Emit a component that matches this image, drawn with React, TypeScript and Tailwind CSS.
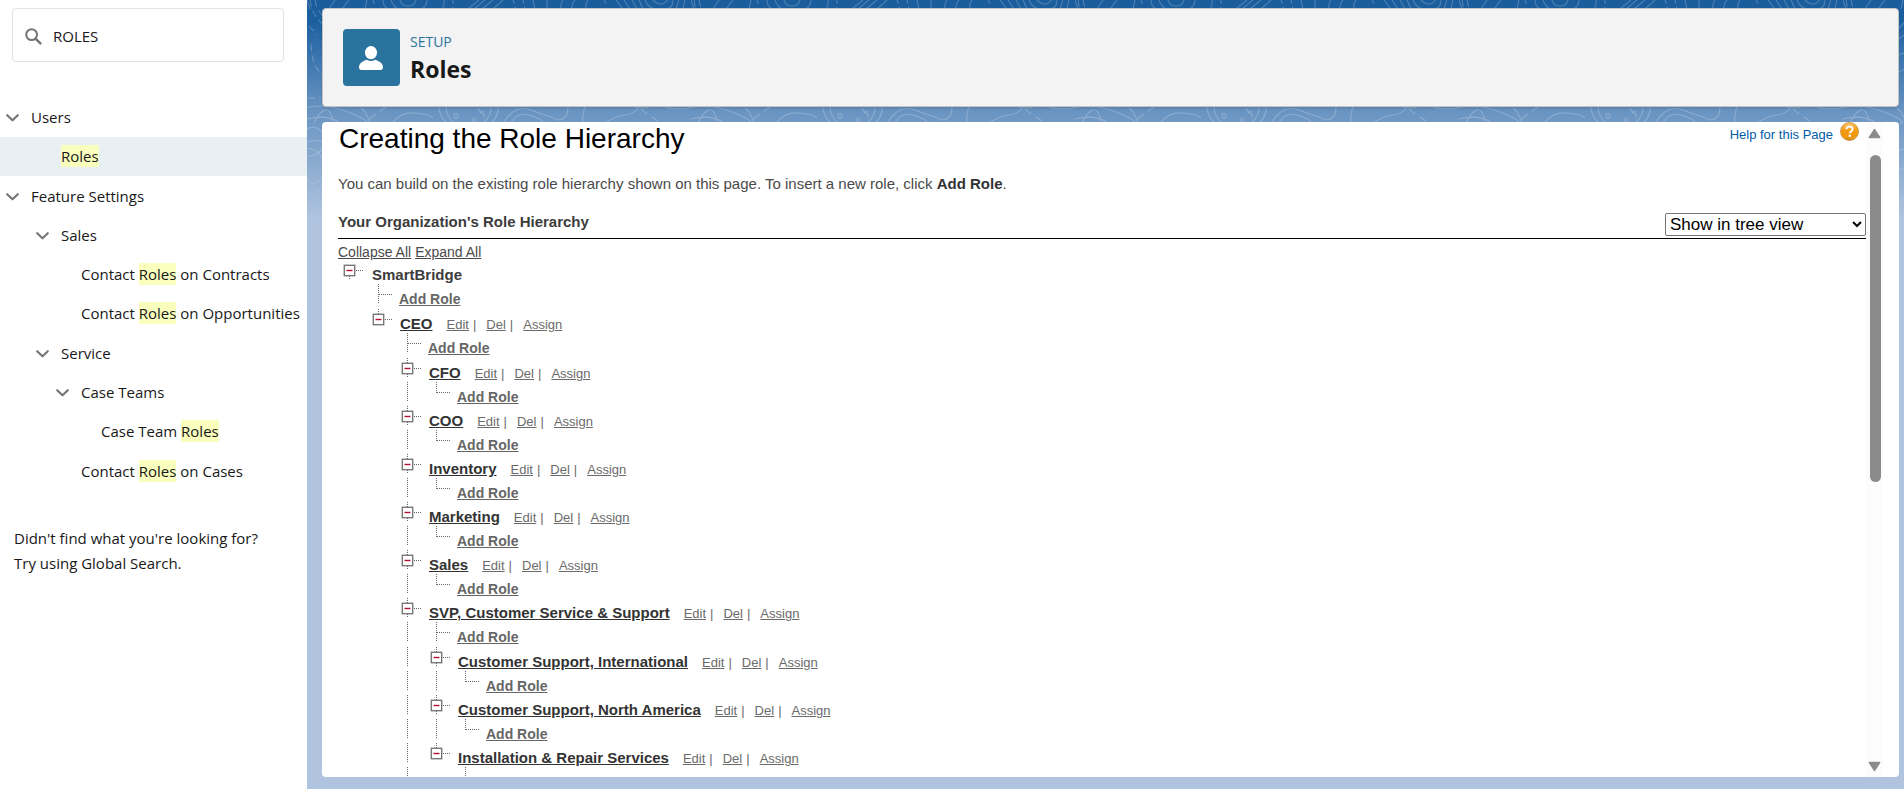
import React from "react";

/* ---------- Sidebar ---------- */

type NavNode = { label: string; active?: boolean; children?: NavNode[] };

const NAV: NavNode[] = [
  { label: "Users", children: [{ label: "Roles", active: true }] },
  {
    label: "Feature Settings",
    children: [
      {
        label: "Sales",
        children: [{ label: "Contact Roles on Contracts" }, { label: "Contact Roles on Opportunities" }],
      },
      {
        label: "Service",
        children: [
          { label: "Case Teams", children: [{ label: "Case Team Roles" }] },
          { label: "Contact Roles on Cases" },
        ],
      },
    ],
  },
];

const NAV_INDENT = ["pl-[31px]", "pl-[61px]", "pl-[81px]", "pl-[101px]"];
const NAV_GROUP_INDENT = ["pl-[6px]", "pl-[36px]", "pl-[56px]", "pl-[76px]"];

function Highlighted({ text }: { text: string }) {
  return (
    <span className="whitespace-pre">
      {text.split(/(Roles)/).map((part, i) =>
        part === "Roles" ? (
          <mark key={i} className="bg-[#faffbd] py-px text-inherit">
            {part}
          </mark>
        ) : (
          part
        ),
      )}
    </span>
  );
}

function NavList({ nodes, level = 0 }: { nodes: NavNode[]; level?: number }) {
  return (
    <ul className={level === 0 ? "" : "pb-px"}>
      {nodes.map((node) => (
        <li key={node.label}>
          {node.children ? (
            <button
              type="button"
              aria-expanded="true"
              className={`flex h-[39px] w-full items-center gap-3 text-left ${NAV_GROUP_INDENT[level]}`}
            >
              <svg width="13" height="8" viewBox="0 0 13 8" className="shrink-0" aria-hidden="true">
                <path
                  d="M1.2 1.2 6.5 6.3 11.8 1.2"
                  fill="none"
                  stroke="#747474"
                  strokeWidth="2.1"
                  strokeLinecap="round"
                  strokeLinejoin="round"
                />
              </svg>
              <span>{node.label}</span>
            </button>
          ) : (
            <a
              href="#"
              className={`flex h-[39px] items-center ${NAV_INDENT[level]} ${node.active ? "bg-[#e8f0f3]" : ""}`}
            >
              <Highlighted text={node.label} />
            </a>
          )}
          {node.children && <NavList nodes={node.children} level={level + 1} />}
        </li>
      ))}
    </ul>
  );
}

function Sidebar() {
  return (
    <aside className="w-[307px] shrink-0 overflow-hidden bg-white font-['Open_Sans','Noto_Sans',sans-serif] text-[15px] text-[#181818]">
      <label className="mt-2 ml-3 flex h-[54px] w-[272px] items-center gap-[11px] rounded border border-[#e2e2e2] pt-[2px] pl-3">
        <svg width="17" height="17" viewBox="0 0 17 17" aria-hidden="true">
          <circle cx="6.6" cy="6.6" r="5.4" fill="none" stroke="#747474" strokeWidth="2" />
          <path d="m10.8 10.8 4.6 4.6" stroke="#747474" strokeWidth="2.4" strokeLinecap="round" />
        </svg>
        <input
          type="text"
          aria-label="Quick Find"
          defaultValue="ROLES"
          className="w-[200px] bg-transparent outline-none"
        />
      </label>
      <nav className="mt-9" aria-label="Setup">
        <NavList nodes={NAV} />
      </nav>
      <p className="mt-[33px] pl-[14px] leading-[25px]">
        Didn't find what you're looking for?
        <br />
        Try using Global Search.
      </p>
    </aside>
  );
}

/* ---------- Backdrop ---------- */

function Backdrop() {
  return (
    <svg className="absolute inset-0 h-full w-full" aria-hidden="true">
      <defs>
        <linearGradient id="sky" gradientUnits="userSpaceOnUse" x1="0" y1="0" x2="0" y2="220">
          <stop offset="0" stopColor="#1a5c9c" />
          <stop offset="0.1" stopColor="#1d60a0" />
          <stop offset="0.5" stopColor="#6893c1" />
          <stop offset="1" stopColor="#b0c4df" />
        </linearGradient>
        <pattern id="contours" patternUnits="userSpaceOnUse" width="384" height="240">
          <g fill="none" stroke="#fff" strokeOpacity="0.22" strokeWidth="1.1">
            <path d="M3 0Q5 16 18 26M8 0Q10 14 22 20M2 26l8 9M4 44q1 20 7 26t7 12M1 98h6l6-1" strokeDasharray="7 4" />
            <path d="M-12 0l-2 9M-6 0v9M0 0l3 9M378 0l-2 9M372 0l-3 9M309 0l7 9M317 0l6 9M325 0l5 9M332 0l4 9M338 0Q342 10 354 10T366 0M346 0q8 8 15 0" />
            <path d="M76 0q0 6 5 9M84 0q2 6 7 9M93 0q1 6 8 6t8-6M120 0q0 5-5 9M137 0q1 5-2 9M60 0l-2 9M28 0l-6 9M42 0l-7 9" />
            <path d="M172 0l-11 9M178 0l-11 9M186 0l-11 9M196 0l-10 9M226 0l2 9M240 0v9M256 0q-3 4-2 9M268 0q-4 4-3 9M281 0q-3 4-2 9" />
            <path d="M206 0l3 9M216 0l2 9M146 0v9M297 0l4 6M66 0l2 6" strokeDasharray="4 3" />
            <path d="M-26 107Q-18 111 2 107T46 114 52 123M358 107Q370 111 386 107" />
            <path d="M7 123Q12 112 18 110T26 123M0 119Q18 114 32 122" />
            <path d="M63 119l6-5M73 111l6-4M334 109l6 5M345 117l6 4" />
            <path d="M86 122Q94 112 108 113T126 118" />
            <path d="M132 107Q132 116 140 123M139 107Q139 116 147 123M191 107Q192 116 184 123M184 107Q184 117 176 123" />
            <ellipse cx="149" cy="116" rx="1.8" ry="2.6" />
            <ellipse cx="167" cy="120" rx="1.4" ry="2" />
            <path d="M171 108l3 5 1-2 3 6" />
            <path d="M197 122Q208 104 224 110T252 120Q261 119 261 107M204 122Q212 112 222 115T236 122" />
            <path d="M278 107Q275 114 276 123M300 122Q308 116 318 115T332 107M328 107q8 2 14 0" />
            <path d="M0 142q12-3 16 0M0 148q14 2 16 14M0 157q14-3 16-10M0 180q8 8 16-4M0 129q8-5 16 4" />
            <path d="M1 195l5-1M9 192l5-2M0 217l6-3M2 229l8-3" />
            <path d="M55 40q4-5 9-6M56 55q5-2 8-4M55 72q6-2 9-6M54 108q10 8 11 30M56 150q5 0 8-3M55 168q6 3 9 2M56 200h8M56 214l8-3M56 28l8-8" />
          </g>
        </pattern>
        <linearGradient id="fade" x1="0" y1="0" x2="0" y2="1">
          <stop offset="0.6" stopColor="#fff" />
          <stop offset="1" stopColor="#000" />
        </linearGradient>
        <mask id="fadeOut" maskUnits="userSpaceOnUse" x="0" y="0" width="4000" height="240">
          <rect width="4000" height="240" fill="url(#fade)" />
        </mask>
      </defs>
      <rect width="100%" height="100%" fill="#b0c4df" />
      <rect width="100%" height="220" fill="url(#sky)" />
      <rect width="100%" height="240" fill="url(#contours)" mask="url(#fadeOut)" />
    </svg>
  );
}

/* ---------- Page header ---------- */

function PageHeader() {
  return (
    <header className="flex h-[99px] shrink-0 items-center gap-[10px] rounded border border-[#c4c4c4] bg-[#f3f3f3] pl-5 font-['Open_Sans','Noto_Sans',sans-serif] shadow-[0_2px_2px_rgba(0,0,0,0.1)]">
      <span className="flex size-[57px] items-center justify-center rounded bg-[#2a739e]">
        <svg width="25" height="24" viewBox="0 0 25 24" fill="#fff" aria-hidden="true">
          <ellipse cx="12" cy="6.6" rx="6.1" ry="6.6" />
          <path d="M0 21.6C0 17 3.6 15.3 7 13.9q.6-.2 1.2.1 3.8 2.2 7.6 0 .6-.3 1.2-.1c3.4 1.4 7 3.1 7 7.7 0 1.5-1 2.4-2.4 2.4H2.4C1 24 0 23.1 0 21.6Z" />
        </svg>
      </span>
      <h1 className="flex flex-col pt-[3px]">
        <span className="text-sm leading-5 text-[#2a739e]">SETUP</span>
        <span className="text-[23px] leading-[34px] font-bold text-[#181818]">Roles</span>
      </h1>
    </header>
  );
}

/* ---------- Role tree ---------- */

/* `partial` marks a branch whose child rows have not been loaded yet. */
type Role = { name: string; children?: Role[]; partial?: boolean };

const CEO: Role = {
  name: "CEO",
  partial: true,
  children: [
    { name: "CFO" },
    { name: "COO" },
    { name: "Inventory" },
    { name: "Marketing" },
    { name: "Sales" },
    {
      name: "SVP, Customer Service & Support",
      children: [
        { name: "Customer Support, International" },
        { name: "Customer Support, North America" },
        { name: "Installation & Repair Services", partial: true },
      ],
    },
  ],
};

type Cell = "blank" | "line" | "tee" | "corner" | "root" | "node" | "lastNode";

function TreeCell({ kind }: { kind: Cell }) {
  const isNode = kind === "root" || kind === "node" || kind === "lastNode";
  return (
    <svg width="29" height="20" viewBox="0 0 29 20" className="shrink-0" aria-hidden="true">
      <g stroke="#666" strokeWidth="1" strokeDasharray="1 1" fill="none">
        {(kind === "line" || kind === "tee") && <path d="M11.5 0V19" />}
        {kind === "corner" && <path d="M11.5 0V11" />}
        {(kind === "tee" || kind === "corner") && <path d="M12 10.5H25" />}
        {isNode && <path d="M18 10.5H25" />}
        {(kind === "node" || kind === "lastNode") && <path d="M11.5 0V5" />}
        {(kind === "node" || kind === "root") && <path d="M11.5 16V19" />}
      </g>
      {isNode && (
        <>
          <rect x="6.3" y="5.3" width="10.4" height="10.4" fill="#fff" stroke="#777" strokeWidth="1.4" />
          <path d="M8.5 10.5h6" stroke="#b3122e" strokeWidth="1.4" />
        </>
      )}
    </svg>
  );
}

function AddRow({ trail, last }: { trail: Cell[]; last: boolean }) {
  return (
    <li className={`flex items-start ${last ? "h-6" : "h-[25px]"}`}>
      {trail.map((kind, i) => (
        <TreeCell key={i} kind={kind} />
      ))}
      <TreeCell kind={last ? "corner" : "tee"} />
      <a href="#" className="ml-[3px] pt-[6px] text-sm leading-[19px] font-bold text-[#666] underline">
        Add Role
      </a>
    </li>
  );
}

function RoleBranch({ role, trail, last }: { role: Role; trail: Cell[]; last: boolean }) {
  const childTrail: Cell[] = [...trail, last ? "blank" : "line"];
  const children = role.children;
  return (
    <li>
      <div className="flex h-6 items-start">
        {trail.map((kind, i) => (
          <TreeCell key={i} kind={kind} />
        ))}
        <TreeCell kind={last ? "lastNode" : "node"} />
        <div className="ml-1 flex items-baseline pt-[5px] text-[13px] leading-[19px] whitespace-nowrap text-[#6b6b6b]">
          <a href="#" className="mr-[14px] text-[15px] font-bold text-[#333] underline">
            {role.name}
          </a>
          <a href="#" className="underline">Edit</a>
          <span className="mr-[10px] ml-1">|</span>
          <a href="#" className="underline">Del</a>
          <span className="mr-[10px] ml-1">|</span>
          <a href="#" className="underline">Assign</a>
        </div>
      </div>
      {role.partial && !children ? (
        <div className="flex h-6 items-start">
          {childTrail.map((kind, i) => (
            <TreeCell key={i} kind={kind} />
          ))}
          <TreeCell kind="tee" />
        </div>
      ) : (
        <ul>
          <AddRow trail={childTrail} last={!children} />
          {children?.map((child, i) => (
            <RoleBranch
              key={child.name}
              role={child}
              trail={childTrail}
              last={!role.partial && i === children.length - 1}
            />
          ))}
        </ul>
      )}
    </li>
  );
}

function RoleTree() {
  return (
    <div>
      <div className="flex h-6 items-start">
        <TreeCell kind="root" />
        <span className="ml-[5px] pt-[5px] text-[15px] leading-[19px] font-bold text-[#3c3c3c]">SmartBridge</span>
      </div>
      <ul>
        <AddRow trail={["blank"]} last={false} />
        <RoleBranch role={CEO} trail={["blank"]} last />
      </ul>
    </div>
  );
}

/* ---------- Content ---------- */

function HelpIcon() {
  return (
    <svg width="19" height="19" viewBox="0 0 19 19" aria-hidden="true">
      <defs>
        <linearGradient id="amber" x1="0" y1="0" x2="0" y2="1">
          <stop offset="0" stopColor="#fbc56a" />
          <stop offset="0.45" stopColor="#f39a12" />
          <stop offset="0.85" stopColor="#ee9a10" />
          <stop offset="1" stopColor="#b97d2c" />
        </linearGradient>
      </defs>
      <circle cx="9.5" cy="9.5" r="9" fill="url(#amber)" stroke="#c98a35" strokeWidth="0.8" />
      <path
        d="M6.4 7.2C6.5 5.4 7.8 4.5 9.5 4.5s3.1 1 3.1 2.6c0 2.1-2.7 2.2-2.7 4.2"
        fill="none"
        stroke="#fff"
        strokeWidth="1.9"
      />
      <circle cx="9.8" cy="13.8" r="1.2" fill="#fff" />
    </svg>
  );
}

function ScrollBar() {
  return (
    <div className="mr-4 flex w-[17px] shrink-0 flex-col items-center bg-[#fcfcfc] pt-[6px] pb-[5px]" aria-hidden="true">
      <svg width="13" height="11" viewBox="0 0 13 11">
        <path d="M6.5 1.6 11.6 9.4H1.4Z" fill="#8b8b8b" stroke="#8b8b8b" strokeWidth="1.6" strokeLinejoin="round" />
      </svg>
      <div className="mt-4 w-full flex-1 px-[3px]">
        <div className="ml-px h-[54%] w-[11px] rounded-full bg-[#8b8b8b]" />
      </div>
      <svg width="13" height="11" viewBox="0 0 13 11">
        <path d="M6.5 9.4 11.6 1.6H1.4Z" fill="#8b8b8b" stroke="#8b8b8b" strokeWidth="1.6" strokeLinejoin="round" />
      </svg>
    </div>
  );
}

function Content() {
  return (
    <main className="mt-[15px] mb-3 flex min-h-0 flex-1 overflow-hidden rounded bg-white font-['Liberation_Sans',Arial,sans-serif]">
      <div className="min-w-0 flex-1 overflow-hidden pl-4">
        <div className="flex items-start justify-between">
          <h2 className="pl-px text-[28px] leading-[34px] text-black">Creating the Role Hierarchy</h2>
          <a href="#" className="mr-[7px] flex items-start gap-[7px] text-[13px] text-[#015ba7]">
            <span className="pt-1 leading-[18px]">Help for this Page</span>
            <HelpIcon />
          </a>
        </div>
        <p className="mt-[18px] text-[15px] leading-5 text-[#4a4a4a]">
          You can build on the existing role hierarchy shown on this page. To insert a new role, click{" "}
          <b className="text-[#333]">Add Role</b>.
        </p>
        <div className="mt-[19px] flex items-start justify-between border-b border-black pb-[2px]">
          <h3 className="text-[15px] leading-[18px] font-bold text-[#3c3c3c]">Your Organization's Role Hierarchy</h3>
          <select
            aria-label="Hierarchy view"
            className="h-[23px] w-[201px] rounded-[2px] border border-[#767676] bg-white text-[17px] leading-5 text-black"
          >
            <option>Show in tree view</option>
            <option>Show in sorted list view</option>
            <option>Show in list view</option>
          </select>
        </div>
        <div className="flex h-[21px] items-start gap-1 pt-1 text-sm leading-[18px] text-[#4a4a4a]">
          <a href="#" className="underline">Collapse All</a>
          <a href="#" className="underline">Expand All</a>
        </div>
        <RoleTree />
      </div>
      <ScrollBar />
    </main>
  );
}

export default function App() {
  return (
    <div className="flex h-screen overflow-hidden bg-white">
      <Sidebar />
      <div className="relative min-w-0 flex-1">
        <Backdrop />
        <div className="relative flex h-full flex-col pt-2 pr-[5px] pl-[15px]">
          <PageHeader />
          <Content />
        </div>
      </div>
    </div>
  );
}
